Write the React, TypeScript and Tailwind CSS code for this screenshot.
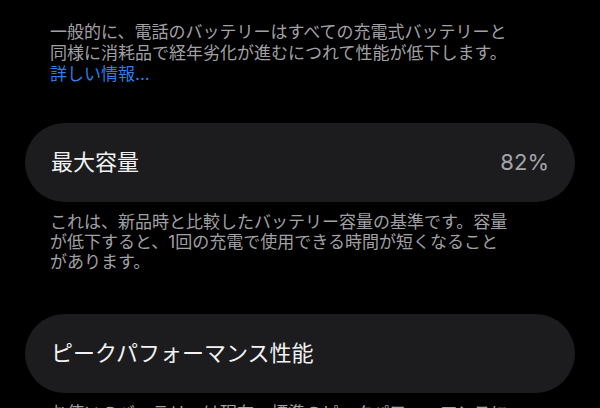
export default function App() {
  return (
    <div className="h-[408px] w-[600px] overflow-hidden bg-black font-['Inter','Noto_Sans_CJK_JP',sans-serif]">
      <div className="px-[25px] pt-[22px]">
        {/* intro */}
        <p className="pl-[25px] text-[17px] leading-[21px] text-[#a0a0a5] whitespace-nowrap">
          一般的に、電話のバッテリーはすべての充電式バッテリーと
          <br />
          同様に消耗品で経年劣化が進むにつれて性能が低下します。
          <br />
          <span className="text-[#2d7ee6]">詳しい情報...</span>
        </p>

        {/* max capacity */}
        <div className="mt-[38px] flex h-[79px] items-center justify-between rounded-full bg-[#1c1c1e] px-[26px]">
          <span className="text-[22px] text-[#f2f2f2]">最大容量</span>
          <span className="text-[22px] text-[#a5a5aa]">82%</span>
        </div>
        <p className="mt-[10px] pl-[25px] text-[17px] leading-[20px] text-[#a0a0a5] whitespace-nowrap">
          これは、新品時と比較したバッテリー容量の基準です。容量
          <br />
          が低下すると、1回の充電で使用できる時間が短くなること
          <br />
          があります。
        </p>

        {/* peak performance */}
        <div className="mt-[42px] flex h-[79px] items-center rounded-full bg-[#1c1c1e] px-[26px]">
          <span className="text-[22px] text-[#f2f2f2]">ピークパフォーマンス性能</span>
        </div>
        <p className="mt-[10px] pl-[25px] text-[17px] leading-[20px] text-[#a0a0a5] whitespace-nowrap">
          お使いのバッテリーは現在、標準のピークパフォーマンスに
          <br />
          対応しています。
        </p>
      </div>
    </div>
  )
}
